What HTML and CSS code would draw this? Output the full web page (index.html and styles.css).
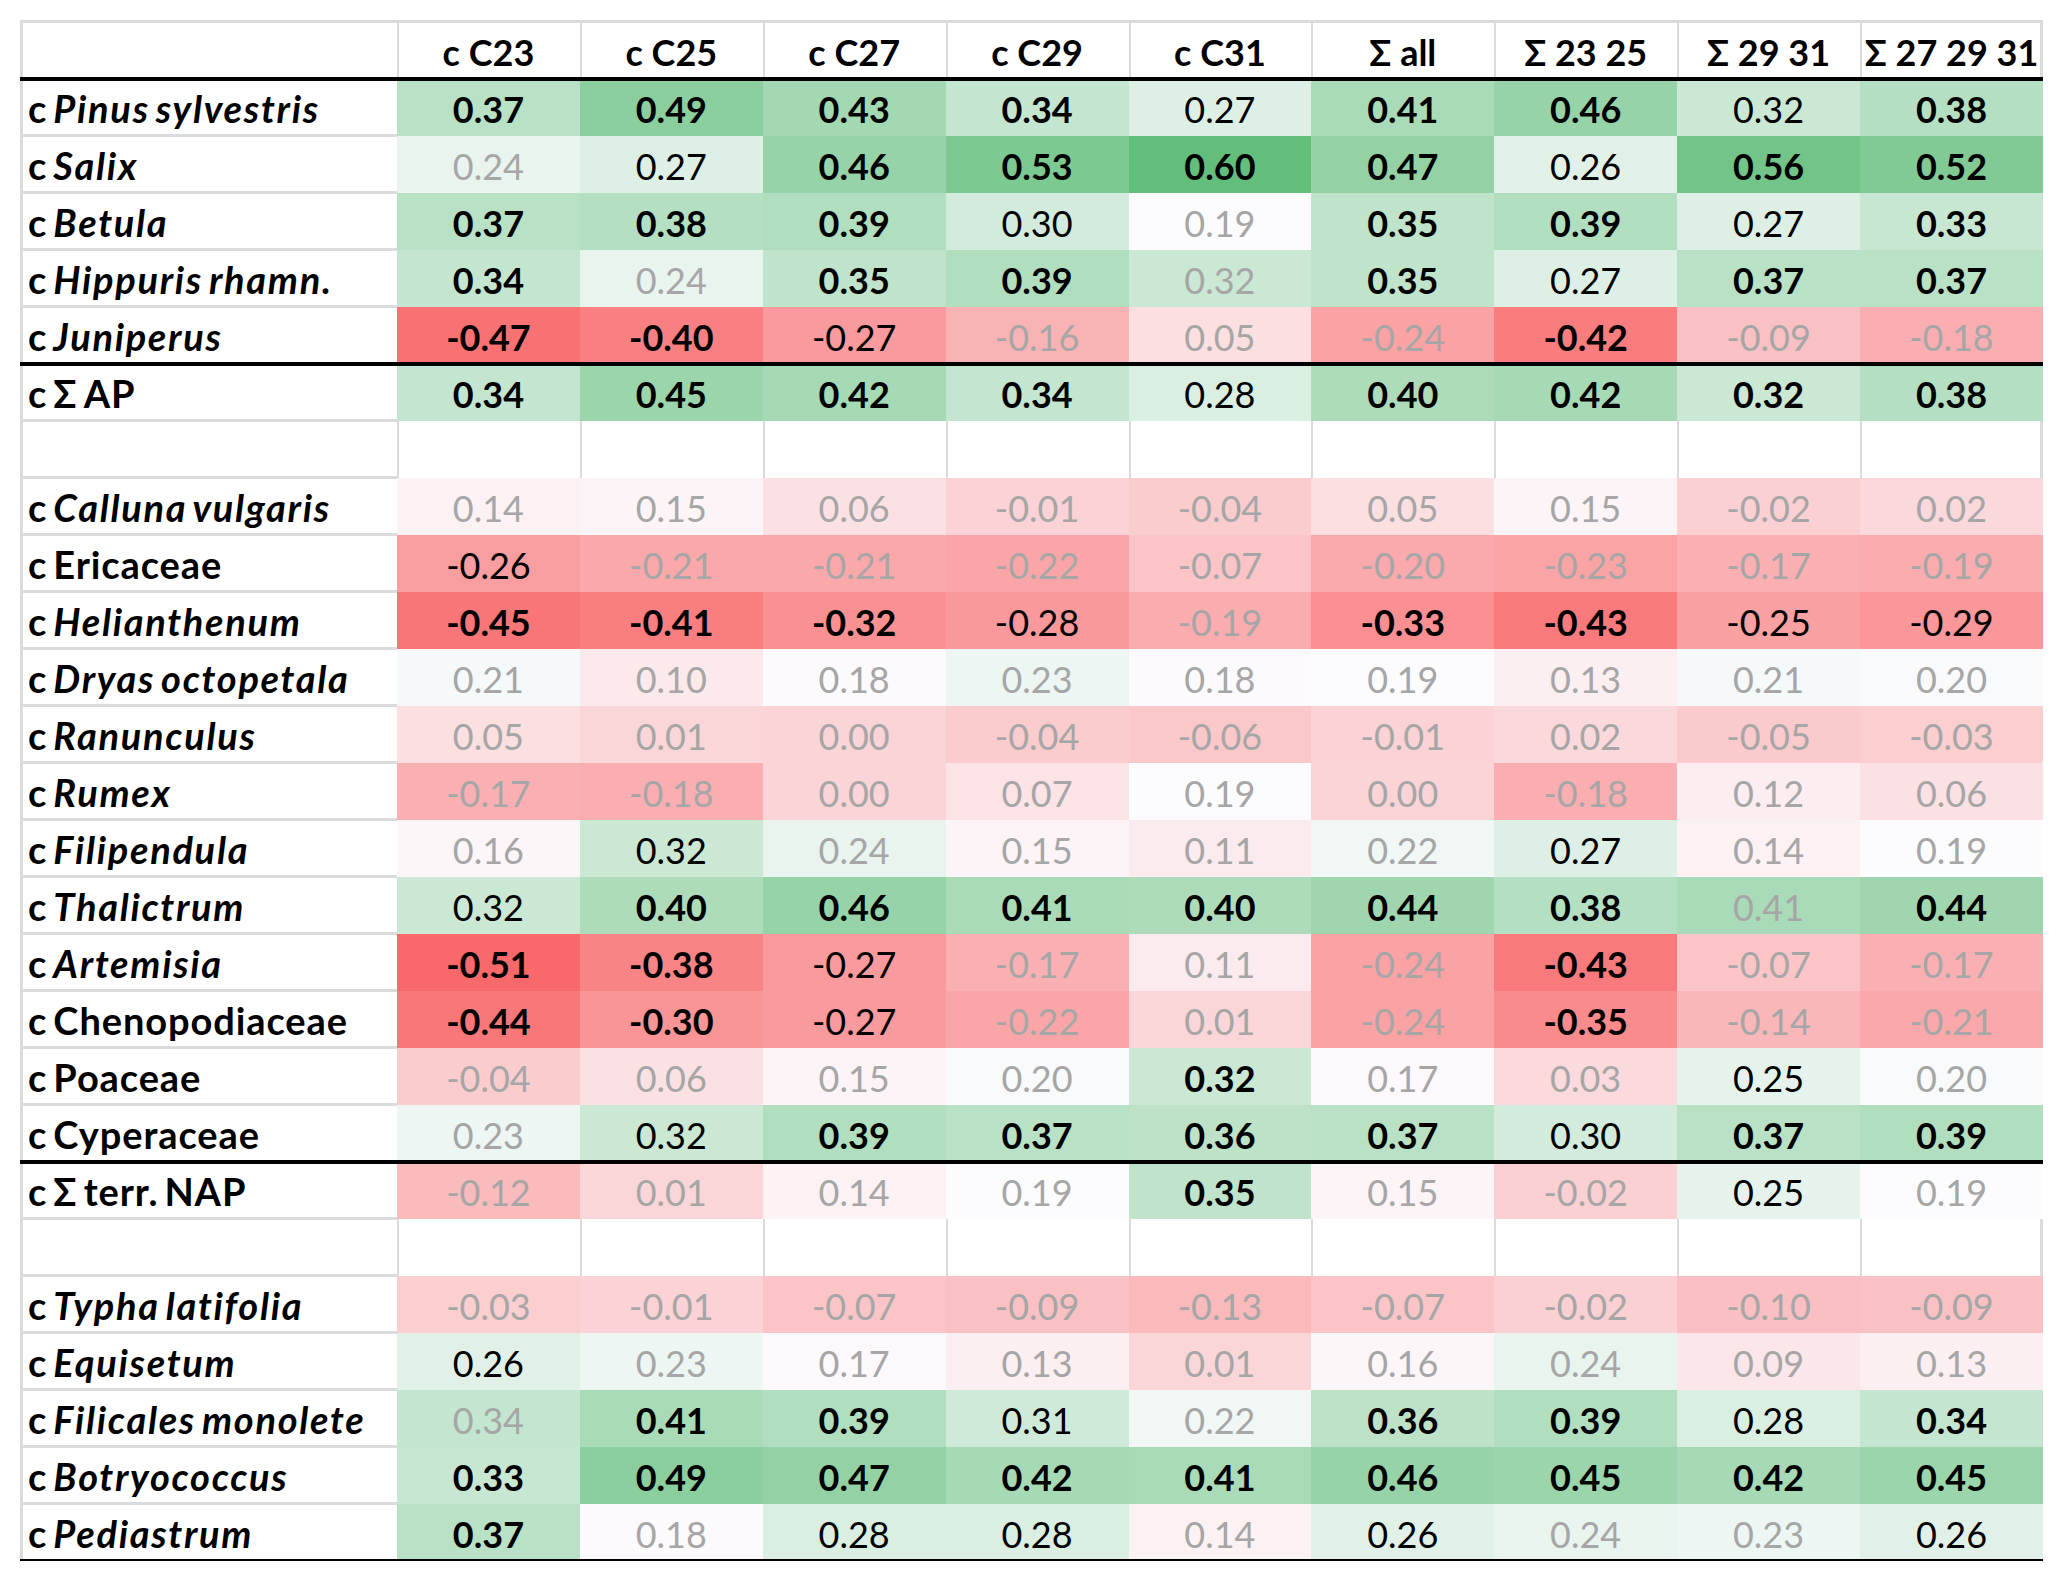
FILE: index.html
```html
<!DOCTYPE html>
<html lang="en">
<head>
<meta charset="utf-8">
<title>Correlation table</title>
<link rel="stylesheet" href="styles.css">
</head>
<body>
<div class="sheet">
<table class="corr">
<colgroup><col class="col-label"><col span="9" class="col-val"></colgroup>
<thead>
<tr class="hdr rule-below">
<th class="lab"></th><th>c C23</th><th>c C25</th><th>c C27</th><th>c C29</th><th>c C31</th><th>&Sigma; all</th><th>&Sigma; 23 25</th><th>&Sigma; 29 31</th><th class="end">&Sigma; 27 29 31</th>
</tr>
</thead>
<tbody>
<tr class="rule-above"><td class="lab">c <i>Pinus sylvestris</i></td><td class="v b">0.37</td><td class="v b">0.49</td><td class="v b">0.43</td><td class="v b">0.34</td><td class="v">0.27</td><td class="v b">0.41</td><td class="v b">0.46</td><td class="v">0.32</td><td class="v b">0.38</td></tr>
<tr><td class="lab">c <i>Salix</i></td><td class="v g">0.24</td><td class="v">0.27</td><td class="v b">0.46</td><td class="v b">0.53</td><td class="v b">0.60</td><td class="v b">0.47</td><td class="v">0.26</td><td class="v b">0.56</td><td class="v b">0.52</td></tr>
<tr><td class="lab">c <i>Betula</i></td><td class="v b">0.37</td><td class="v b">0.38</td><td class="v b">0.39</td><td class="v">0.30</td><td class="v g">0.19</td><td class="v b">0.35</td><td class="v b">0.39</td><td class="v">0.27</td><td class="v b">0.33</td></tr>
<tr><td class="lab">c <i>Hippuris rhamn.</i></td><td class="v b">0.34</td><td class="v g">0.24</td><td class="v b">0.35</td><td class="v b">0.39</td><td class="v g">0.32</td><td class="v b">0.35</td><td class="v">0.27</td><td class="v b">0.37</td><td class="v b">0.37</td></tr>
<tr class="rule-below"><td class="lab">c <i>Juniperus</i></td><td class="v b">-0.47</td><td class="v b">-0.40</td><td class="v">-0.27</td><td class="v g">-0.16</td><td class="v g">0.05</td><td class="v g">-0.24</td><td class="v b">-0.42</td><td class="v g">-0.09</td><td class="v g">-0.18</td></tr>
<tr class="rule-above"><td class="lab">c &Sigma; AP</td><td class="v b">0.34</td><td class="v b">0.45</td><td class="v b">0.42</td><td class="v b">0.34</td><td class="v">0.28</td><td class="v b">0.40</td><td class="v b">0.42</td><td class="v b">0.32</td><td class="v b">0.38</td></tr>
<tr class="blank"><td class="lab"></td><td></td><td></td><td></td><td></td><td></td><td></td><td></td><td></td><td class="end"></td></tr>
<tr><td class="lab">c <i>Calluna vulgaris</i></td><td class="v g">0.14</td><td class="v g">0.15</td><td class="v g">0.06</td><td class="v g">-0.01</td><td class="v g">-0.04</td><td class="v g">0.05</td><td class="v g">0.15</td><td class="v g">-0.02</td><td class="v g">0.02</td></tr>
<tr><td class="lab">c Ericaceae</td><td class="v">-0.26</td><td class="v g">-0.21</td><td class="v g">-0.21</td><td class="v g">-0.22</td><td class="v g">-0.07</td><td class="v g">-0.20</td><td class="v g">-0.23</td><td class="v g">-0.17</td><td class="v g">-0.19</td></tr>
<tr><td class="lab">c <i>Helianthenum</i></td><td class="v b">-0.45</td><td class="v b">-0.41</td><td class="v b">-0.32</td><td class="v">-0.28</td><td class="v g">-0.19</td><td class="v b">-0.33</td><td class="v b">-0.43</td><td class="v">-0.25</td><td class="v">-0.29</td></tr>
<tr><td class="lab">c <i>Dryas octopetala</i></td><td class="v g">0.21</td><td class="v g">0.10</td><td class="v g">0.18</td><td class="v g">0.23</td><td class="v g">0.18</td><td class="v g">0.19</td><td class="v g">0.13</td><td class="v g">0.21</td><td class="v g">0.20</td></tr>
<tr><td class="lab">c <i>Ranunculus</i></td><td class="v g">0.05</td><td class="v g">0.01</td><td class="v g">0.00</td><td class="v g">-0.04</td><td class="v g">-0.06</td><td class="v g">-0.01</td><td class="v g">0.02</td><td class="v g">-0.05</td><td class="v g">-0.03</td></tr>
<tr><td class="lab">c <i>Rumex</i></td><td class="v g">-0.17</td><td class="v g">-0.18</td><td class="v g">0.00</td><td class="v g">0.07</td><td class="v g">0.19</td><td class="v g">0.00</td><td class="v g">-0.18</td><td class="v g">0.12</td><td class="v g">0.06</td></tr>
<tr><td class="lab">c <i>Filipendula</i></td><td class="v g">0.16</td><td class="v">0.32</td><td class="v g">0.24</td><td class="v g">0.15</td><td class="v g">0.11</td><td class="v g">0.22</td><td class="v">0.27</td><td class="v g">0.14</td><td class="v g">0.19</td></tr>
<tr><td class="lab">c <i>Thalictrum</i></td><td class="v">0.32</td><td class="v b">0.40</td><td class="v b">0.46</td><td class="v b">0.41</td><td class="v b">0.40</td><td class="v b">0.44</td><td class="v b">0.38</td><td class="v g">0.41</td><td class="v b">0.44</td></tr>
<tr><td class="lab">c <i>Artemisia</i></td><td class="v b">-0.51</td><td class="v b">-0.38</td><td class="v">-0.27</td><td class="v g">-0.17</td><td class="v g">0.11</td><td class="v g">-0.24</td><td class="v b">-0.43</td><td class="v g">-0.07</td><td class="v g">-0.17</td></tr>
<tr><td class="lab">c Chenopodiaceae</td><td class="v b">-0.44</td><td class="v b">-0.30</td><td class="v">-0.27</td><td class="v g">-0.22</td><td class="v g">0.01</td><td class="v g">-0.24</td><td class="v b">-0.35</td><td class="v g">-0.14</td><td class="v g">-0.21</td></tr>
<tr><td class="lab">c Poaceae</td><td class="v g">-0.04</td><td class="v g">0.06</td><td class="v g">0.15</td><td class="v g">0.20</td><td class="v b">0.32</td><td class="v g">0.17</td><td class="v g">0.03</td><td class="v">0.25</td><td class="v g">0.20</td></tr>
<tr class="rule-below"><td class="lab">c Cyperaceae</td><td class="v g">0.23</td><td class="v">0.32</td><td class="v b">0.39</td><td class="v b">0.37</td><td class="v b">0.36</td><td class="v b">0.37</td><td class="v">0.30</td><td class="v b">0.37</td><td class="v b">0.39</td></tr>
<tr class="rule-above"><td class="lab">c &Sigma; terr. NAP</td><td class="v g">-0.12</td><td class="v g">0.01</td><td class="v g">0.14</td><td class="v g">0.19</td><td class="v b">0.35</td><td class="v g">0.15</td><td class="v g">-0.02</td><td class="v">0.25</td><td class="v g">0.19</td></tr>
<tr class="blank"><td class="lab"></td><td></td><td></td><td></td><td></td><td></td><td></td><td></td><td></td><td class="end"></td></tr>
<tr><td class="lab">c <i>Typha latifolia</i></td><td class="v g">-0.03</td><td class="v g">-0.01</td><td class="v g">-0.07</td><td class="v g">-0.09</td><td class="v g">-0.13</td><td class="v g">-0.07</td><td class="v g">-0.02</td><td class="v g">-0.10</td><td class="v g">-0.09</td></tr>
<tr><td class="lab">c <i>Equisetum</i></td><td class="v">0.26</td><td class="v g">0.23</td><td class="v g">0.17</td><td class="v g">0.13</td><td class="v g">0.01</td><td class="v g">0.16</td><td class="v g">0.24</td><td class="v g">0.09</td><td class="v g">0.13</td></tr>
<tr><td class="lab">c <i>Filicales monolete</i></td><td class="v g">0.34</td><td class="v b">0.41</td><td class="v b">0.39</td><td class="v">0.31</td><td class="v g">0.22</td><td class="v b">0.36</td><td class="v b">0.39</td><td class="v">0.28</td><td class="v b">0.34</td></tr>
<tr><td class="lab">c <i>Botryococcus</i></td><td class="v b">0.33</td><td class="v b">0.49</td><td class="v b">0.47</td><td class="v b">0.42</td><td class="v b">0.41</td><td class="v b">0.46</td><td class="v b">0.45</td><td class="v b">0.42</td><td class="v b">0.45</td></tr>
<tr class="last"><td class="lab">c <i>Pediastrum</i></td><td class="v b">0.37</td><td class="v g">0.18</td><td class="v">0.28</td><td class="v">0.28</td><td class="v g">0.14</td><td class="v">0.26</td><td class="v g">0.24</td><td class="v g">0.23</td><td class="v">0.26</td></tr>
</tbody>
</table>
</div>
<script src="script.js"></script>
</body>
</html>
```

FILE: styles.css
```css
html, body {
  margin: 0;
  padding: 0;
  background: #ffffff;
}

.sheet {
  padding: 20px 0 0 20px;
}

.corr {
  border-collapse: separate;
  border-spacing: 0;
  table-layout: fixed;
  width: 2023px;
  font-family: Lato, "Open Sans", "Liberation Sans", sans-serif;
  font-size: 36px;
  color: #000;
}

.col-label { width: 377px; }

.corr th,
.corr td {
  --st: 0 0 0 0 transparent;
  --sb: 0 0 0 0 transparent;
  --sl: 0 0 0 0 transparent;
  --sr: 0 0 0 0 transparent;
  --so: 0 0 0 0 transparent;
  box-shadow: var(--st), var(--sb), var(--sl), var(--sr), var(--so);
  height: 57px;
  padding: 0 0 9px 0;
  box-sizing: border-box;
  line-height: 35px;
  vertical-align: bottom;
  text-align: center;
  white-space: nowrap;
  overflow: visible;
  font-weight: 400;
  background: #fff;
}

.corr thead th {
  height: 59px;
  font-weight: 700;
  --st: inset 0 3px 0 0 #d9dbdd;
  --sl: inset 2px 0 0 0 #d9dbdd;
}
.corr thead th.end { --sr: inset -3px 0 0 0 #d9dbdd; }

.corr .lab {
  text-align: left;
  padding-left: 8px;
  padding-bottom: 10px;
  font-size: 38px;
  letter-spacing: 0.9px;
  word-spacing: -4px;
  font-weight: 700;
  --sl: inset 3px 0 0 0 #d9dbdd;
  --st: inset 0 1px 0 0 #d9dbdd;
  --sb: inset 0 -2px 0 0 #d9dbdd;
}
.corr thead th.lab {
  --sl: inset 3px 0 0 0 #d9dbdd;
  --st: inset 0 3px 0 0 #d9dbdd;
}

.corr .lab i {
  font-style: italic;
  letter-spacing: 1.7px;
}

.corr tr.blank td { --sl: inset 2px 0 0 0 #d9dbdd; }
.corr tr.blank td.lab { --sl: inset 3px 0 0 0 #d9dbdd; }
.corr tr.blank td.end { --sr: inset -3px 0 0 0 #d9dbdd; }

.corr tr.rule-above > * { --st: inset 0 2px 0 0 #000; }
.corr tr.rule-below > * { --sb: inset 0 -2px 0 0 #000; }
.corr tr.last > * {
  --sb: inset 0 -2px 0 0 #000;
  --so: 0 2px 0 0 #000;
}

.corr td.b { font-weight: 700; }
.corr td.g { color: #a6a6a6; }
```

FILE: script.js
```js
(function () {
  var cells = document.querySelectorAll('td.v');
  var vals = [];
  cells.forEach(function (td) { vals.push(parseFloat(td.textContent)); });
  var sorted = vals.slice().sort(function (a, b) { return a - b; });
  var min = sorted[0], max = sorted[sorted.length - 1];
  var n = sorted.length;
  var mid = n % 2 ? sorted[(n - 1) / 2] : (sorted[n / 2 - 1] + sorted[n / 2]) / 2;
  var red = [248, 105, 107], white = [252, 252, 255], green = [99, 190, 123];
  function mix(a, b, t) {
    return a.map(function (x, i) { return Math.round(x + (b[i] - x) * t); });
  }
  cells.forEach(function (td, i) {
    var v = vals[i], c;
    if (v >= mid) c = mix(white, green, (v - mid) / (max - mid));
    else c = mix(white, red, (mid - v) / (mid - min));
    td.style.backgroundColor = 'rgb(' + c.join(',') + ')';
  });
})();
```
